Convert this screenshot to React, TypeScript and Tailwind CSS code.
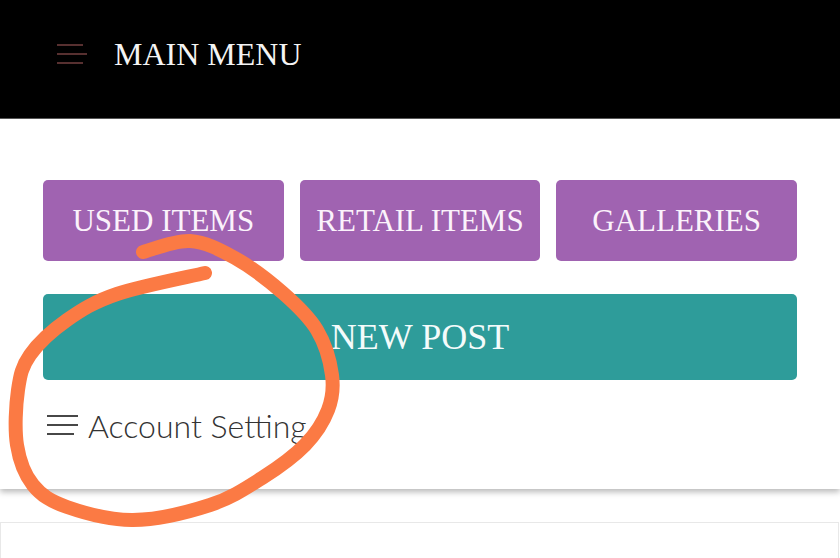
import React from "react";

const pts: [number, number][] = [
  [143, 252], [190, 241], [235, 258], [283, 293], [317, 330], [332, 375],
  [328, 410], [305, 445], [262, 478], [210, 505], [133, 520], [67, 507],
  [33, 485], [17, 445], [18, 390], [30, 355], [67, 320], [117, 294], [205, 273],
];

function catmull(p: [number, number][]): string {
  let d = `M ${p[0][0]} ${p[0][1]}`;
  for (let i = 0; i < p.length - 1; i++) {
    const p0 = p[i - 1] || p[i];
    const p1 = p[i];
    const p2 = p[i + 1];
    const p3 = p[i + 2] || p2;
    const c1x = p1[0] + (p2[0] - p0[0]) / 6;
    const c1y = p1[1] + (p2[1] - p0[1]) / 6;
    const c2x = p2[0] - (p3[0] - p1[0]) / 6;
    const c2y = p2[1] - (p3[1] - p1[1]) / 6;
    d += ` C ${c1x.toFixed(1)} ${c1y.toFixed(1)}, ${c2x.toFixed(1)} ${c2y.toFixed(1)}, ${p2[0]} ${p2[1]}`;
  }
  return d;
}

const circlePath = catmull(pts);

export default function App() {
  return (
    <div className="relative w-[840px] h-[558px] overflow-hidden bg-white">
      <header className="h-[119px] bg-black border-b border-[#5a5a5a] flex items-center">
        <svg width="32" height="22" viewBox="0 0 32 22" className="ml-[56px] mt-[-10px]">
          <line x1="1" y1="2" x2="27" y2="2" stroke="#6e3d3d" strokeWidth="1.6" />
          <line x1="1" y1="11" x2="31" y2="11" stroke="#6e3d3d" strokeWidth="1.6" />
          <line x1="1" y1="20" x2="27" y2="20" stroke="#6e3d3d" strokeWidth="1.6" />
        </svg>
        <span
          className="ml-[26px] mt-[-10px] text-[32px] leading-none text-[#f4f4f4]"
          style={{ fontFamily: '"Liberation Serif", serif' }}
        >
          MAIN MENU
        </span>
      </header>

      <section className="relative bg-white px-[43px] pt-[61px] h-[370px] shadow-[0_3px_6px_rgba(0,0,0,0.28)]">
        <div
          className="grid grid-cols-3 gap-[16px]"
          style={{ fontFamily: '"Liberation Serif", serif' }}
        >
          {["USED ITEMS", "RETAIL ITEMS", "GALLERIES"].map((t) => (
            <div
              key={t}
              className="h-[81px] rounded-[5px] bg-[#a063b1] flex items-center justify-center text-[31px] leading-none text-[#fbf2fb]"
            >
              {t}
            </div>
          ))}
        </div>
        <div
          className="mt-[33px] h-[86px] rounded-[5px] bg-[#2e9c9a] flex items-center justify-center text-[36px] leading-none text-[#f4fbfb]"
          style={{ fontFamily: '"Liberation Serif", serif' }}
        >
          NEW POST
        </div>
        <div className="mt-[28px] flex items-center ml-[4px]">
          <svg width="32" height="22" viewBox="0 0 32 22">
            <line x1="0" y1="2" x2="31" y2="2" stroke="#333" strokeWidth="1.8" />
            <line x1="0" y1="11" x2="31" y2="11" stroke="#333" strokeWidth="1.8" />
            <line x1="0" y1="20" x2="27" y2="20" stroke="#333" strokeWidth="1.8" />
          </svg>
          <span
            className="ml-[9px] mt-[2px] text-[32px] leading-none font-light text-[#333]"
            style={{ fontFamily: 'Lato, sans-serif' }}
          >
            Account Setting
          </span>
        </div>
      </section>

      <div className="mt-[33px] mr-[1px] h-[60px] border border-[#e8e8e8] bg-white" />

      <svg
        className="absolute left-0 top-0 pointer-events-none"
        width="840"
        height="558"
        viewBox="0 0 840 558"
      >
        <path
          d={circlePath}
          fill="none"
          stroke="#fb7a44"
          strokeWidth="14"
          strokeLinecap="round"
          strokeLinejoin="round"
        />
      </svg>
    </div>
  );
}
